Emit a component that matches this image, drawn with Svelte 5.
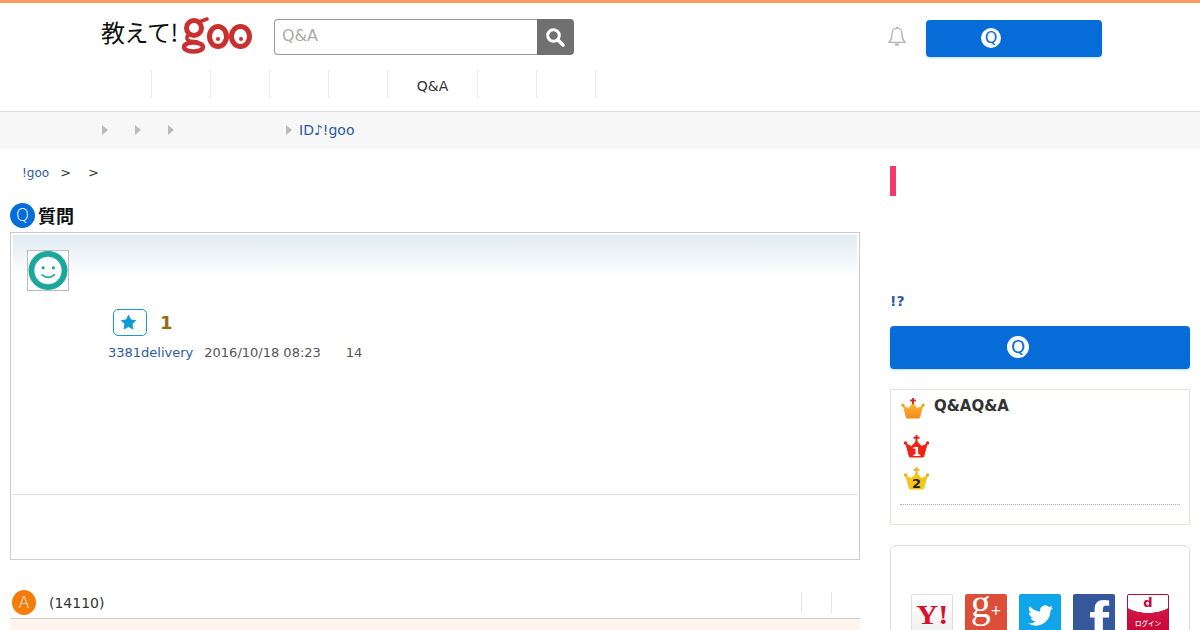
<script>
  const navBefore = [0, 1, 2, 3, 4];
  const navAfter = [0, 1];
  const crumbs = [27, 27, 112];
  const social = ['yahoo', 'gplus', 'twitter', 'facebook', 'docomo'];
  const crown = 'M6.500 23L3 10l5.500 2.500L13.500 7l5 5.500L24 10l-3.500 13z';
</script>

<div class="page">
  <header class="site-head">
    <div class="top">
      <a class="logo" href="#top">
        <span class="logo-ja">教えて!</span>
        <svg class="goo" viewBox="0 0 72 38" width="72" height="38" aria-label="goo">
          <g fill="none" stroke="#c8312f">
            <ellipse cx="13" cy="12" rx="7.500" ry="7.500" stroke-width="5" />
            <ellipse cx="12.500" cy="31" rx="9.500" ry="4.500" stroke-width="4.500" />
            <path d="M8 18c-3 3-3 6 1 7l8 1" stroke-width="3.500" />
            <path d="M18 6l8-3" stroke-width="3.500" stroke-linecap="round" />
            <ellipse cx="37" cy="20.500" rx="8.500" ry="10" stroke-width="5" />
            <ellipse cx="59.500" cy="20.500" rx="9" ry="10" stroke-width="5" />
          </g>
          <circle cx="37" cy="23" r="2" fill="#c8312f" />
          <circle cx="60" cy="23" r="2" fill="#c8312f" />
        </svg>
      </a>
      <form class="search" onsubmit={(e) => e.preventDefault()}>
        <input type="text" placeholder="Q&A" />
        <button type="submit" aria-label="search">
          <svg viewBox="0 0 20 20" width="20" height="20">
            <circle cx="8.500" cy="8.500" r="5.800" fill="none" stroke="#fff" stroke-width="3" />
            <path d="M13 13l5 5" stroke="#fff" stroke-width="3.400" stroke-linecap="round" />
          </svg>
        </button>
      </form>
      <div class="spacer"></div>
      <svg class="bell" viewBox="0 0 20 22" width="20" height="22">
        <path d="M10 2.200c-3.400 0-5 2.700-5 6 0 3.700-.9 5.800-3 8.200h16c-2.100-2.400-3-4.500-3-8.200 0-3.300-1.600-6-5-6z" fill="none" stroke="#b4b4b4" stroke-width="1.300" />
        <path d="M7.500 17.500c.4 1.500 1.300 2.300 2.500 2.300s2.100-.8 2.500-2.300z" fill="#b4b4b4" />
        <circle cx="10" cy="1.800" r="1.100" fill="#b4b4b4" />
      </svg>
      <a class="ask ask-top" href="#top"><span class="q-badge">Q</span></a>
    </div>
    <nav class="nav">
      {#each navBefore as n (n)}
        <span class="nav-item"></span>
      {/each}
      <span class="nav-item wide">Q&A</span>
      {#each navAfter as n (n)}
        <span class="nav-item"></span>
      {/each}
    </nav>
  </header>

  <div class="notice">
    {#each crumbs as w, i (i)}
      <span class="tri" style="margin-right: {w}px"></span>
    {/each}
    <span class="tri"></span>
    <a href="#top" class="notice-link">ID♪!goo</a>
  </div>

  <div class="columns">
    <main class="left">
      <div class="path">
        <a href="#top">!goo</a><span>&gt;</span><span>&gt;</span>
      </div>

      <h2 class="q-head"><span class="round blue">Q</span><span class="q-label">質問</span></h2>
      <section class="card">
        <div class="glow">
          <div class="avatar">
            <svg viewBox="0 0 40 40" width="40" height="39">
              <circle cx="20" cy="20" r="17" fill="#fff" stroke="#1ba79b" stroke-width="6" />
              <circle cx="15" cy="17.300" r="1.600" fill="#1ba79b" />
              <circle cx="25.500" cy="17.300" r="1.600" fill="#1ba79b" />
              <path d="M14 24.500c3.500 3.300 9 3.300 12.500 0" fill="none" stroke="#1ba79b" stroke-width="1.800" stroke-linecap="round" />
            </svg>
          </div>
        </div>
        <div class="fav">
          <span class="star-btn">
            <svg viewBox="0 0 20 20" width="17" height="17">
              <path d="M10 1.500l2.600 5.400 5.900.8-4.300 4.100 1.100 5.900-5.300-2.900-5.300 2.900 1.100-5.900-4.300-4.100 5.900-.8z" fill="#0f9bd7" stroke="#0f9bd7" stroke-linejoin="round" />
            </svg>
          </span>
          <b>1</b>
        </div>
        <div class="meta">
          <a href="#top">3381delivery</a>
          <span>2016/10/18 08:23</span>
          <span class="views">14</span>
        </div>
        <div class="rule"></div>
      </section>

      <div class="a-head">
        <span class="round orange">A</span>
        <span class="count">(14110)</span>
        <span class="tabs"><i></i><i></i></span>
      </div>
      <div class="a-body"></div>
    </main>

    <aside class="right">
      <div class="pink"></div>
      <a class="hint" href="#top">!?</a>
      <a class="ask ask-side" href="#top"><span class="q-badge big">Q</span></a>

      <section class="rank">
        <div class="rank-title">
          <svg viewBox="0 0 27 24" width="26" height="22">
            <defs>
              <linearGradient id="crownO" x1="0" y1="0" x2="0" y2="1">
                <stop offset="0" stop-color="#f7b731" />
                <stop offset="1" stop-color="#f58a1f" />
              </linearGradient>
            </defs>
            <path d={crown} fill="url(#crownO)" stroke="url(#crownO)" stroke-linejoin="round" />
            <circle cx="2.500" cy="9" r="1.800" fill="#e8a92b" />
            <circle cx="24.500" cy="9" r="1.800" fill="#e8a92b" />
            <path d="M13.500 1v7M10.500 3.800h6" stroke="#d8212a" stroke-width="2" />
          </svg>
          <h3>Q&AQ&A</h3>
        </div>
        <ul>
          <li>
            <svg viewBox="0 0 27 24" width="27" height="24">
              <path d={crown} fill="#ee2412" stroke="#ee2412" stroke-linejoin="round" />
              <circle cx="2.500" cy="9" r="1.800" fill="#d92a1c" />
              <circle cx="24.500" cy="9" r="1.800" fill="#d92a1c" />
              <path d="M13.500 1v7M10.500 3.800h6" stroke="#d92a1c" stroke-width="2" />
              <text x="13.500" y="22" class="rank-no light">1</text>
            </svg>
          </li>
          <li>
            <svg viewBox="0 0 27 24" width="27" height="24">
              <path d={crown} fill="#f5c518" stroke="#f5c518" stroke-linejoin="round" />
              <circle cx="2.500" cy="9" r="1.800" fill="#e6b422" />
              <circle cx="24.500" cy="9" r="1.800" fill="#e6b422" />
              <path d="M13.500 1v7M10.500 3.800h6" stroke="#e6b422" stroke-width="2" />
              <text x="13.500" y="22" class="rank-no">2</text>
            </svg>
          </li>
        </ul>
        <div class="dots"></div>
      </section>

      <section class="login">
        {#each social as s (s)}
          <a class="sns {s}" href="#top" aria-label={s}>
            {#if s === 'yahoo'}
              <span class="y">Y!</span>
            {:else if s === 'gplus'}
              <span>g<small>+</small></span>
            {:else if s === 'twitter'}
              <svg viewBox="0 0 24 24" width="25" height="25">
                <path fill="#fff" d="M23.953 4.570a10 10 0 01-2.825.775 4.958 4.958 0 002.163-2.723c-.951.555-2.005.959-3.127 1.184a4.920 4.920 0 00-8.384 4.482C7.690 8.095 4.067 6.130 1.640 3.162a4.822 4.822 0 00-.666 2.475c0 1.710.870 3.213 2.188 4.096a4.904 4.904 0 01-2.228-.616v.060a4.923 4.923 0 003.946 4.827 4.996 4.996 0 01-2.212.085 4.936 4.936 0 004.604 3.417 9.867 9.867 0 01-6.102 2.105c-.390 0-.779-.023-1.170-.067a13.995 13.995 0 007.557 2.209c9.053 0 13.998-7.496 13.998-13.985 0-.210 0-.420-.015-.630A9.935 9.935 0 0024 4.590z" />
              </svg>
            {:else if s === 'facebook'}
              <span>f</span>
            {:else}
              <span class="d">d</span>
              <span class="dlogin">ログイン</span>
            {/if}
          </a>
        {/each}
      </section>
    </aside>
  </div>
</div>

<style>
  :global(body) {
    background: #fff;
    color: #333;
    font-family: "DejaVu Sans", "Noto Sans CJK JP", sans-serif;
    overflow: hidden;
  }
  a {
    text-decoration: none;
    color: #2e5a9e;
  }
  h2, h3, ul {
    margin: 0;
    padding: 0;
  }
  .page {
    height: 630px;
    overflow: hidden;
  }

  /* header */
  .site-head {
    border-top: 3px solid #f79e5c;
    border-bottom: 1px solid #ddd;
    height: 108px;
  }
  .top {
    display: flex;
    align-items: flex-start;
    box-sizing: border-box;
    padding: 13px 98px 0 101px;
    height: 54px;
  }
  .logo {
    display: flex;
    align-items: flex-start;
    width: 173px;
    flex: none;
  }
  .logo-ja {
    font: 400 24px/32px "Noto Sans CJK JP", sans-serif;
    color: #111;
    letter-spacing: -.4px;
    width: 80px;
    flex: none;
  }
  .goo {
    flex: none;
    display: block;
  }
  .search {
    display: flex;
    width: 300px;
    height: 36px;
    margin-top: 3px;
    flex: none;
  }
  .search input {
    flex: 1;
    min-width: 0;
    border: 1px solid #999;
    border-right: 0;
    border-radius: 4px 0 0 4px;
    padding: 0 7px 4px;
    font: 16px "DejaVu Sans", sans-serif;
    outline: none;
  }
  .search input::placeholder {
    color: #aaa;
  }
  .search button {
    width: 37px;
    border: 0;
    padding: 0;
    background: #707070;
    border-radius: 0 4px 4px 0;
    display: flex;
    align-items: center;
    justify-content: center;
  }
  .search button svg {
    margin-right: 2px;
  }
  .spacer {
    flex: 1;
  }
  .bell {
    margin: 10px 19px 0 0;
  }
  .ask {
    display: flex;
    align-items: center;
    justify-content: center;
    background: #056cd8;
    border-radius: 4px;
    box-shadow: 0 1px 2px rgba(5, 108, 216, .25);
  }
  .ask-top {
    width: 176px;
    height: 37px;
    margin-top: 4px;
  }
  .ask-top .q-badge {
    margin-right: 46px;
  }
  .q-badge {
    width: 20px;
    height: 20px;
    margin-bottom: 2px;
    border-radius: 50%;
    background: #fff;
    color: #056cd8;
    font: 16px/20px "DejaVu Sans", sans-serif;
    text-align: center;
  }
  .q-badge.big {
    width: 22px;
    height: 22px;
    font-size: 18px;
    line-height: 22px;
    margin-left: -44px;
  }
  .nav {
    display: flex;
    padding: 13px 0 0 93px;
    height: 28px;
  }
  .nav-item {
    width: 58px;
    height: 28px;
    border-right: 1px solid #e8e8e8;
    font-size: 14px;
    line-height: 32px;
    text-align: center;
    color: #333;
  }
  .nav-item.wide {
    width: 89px;
  }
  .notice {
    box-sizing: border-box;
    height: 37px;
    background: #f7f7f7;
    display: flex;
    align-items: center;
    padding: 0 0 2px 102px;
  }
  .tri {
    width: 0;
    height: 0;
    border: 5px solid transparent;
    border-left: 6px solid #bbb;
    border-right: 0;
  }
  .notice-link {
    font-size: 14px;
    margin-left: 7px;
  }

  /* columns */
  .columns {
    display: flex;
    padding: 0 10px;
    gap: 30px;
  }
  .left {
    width: 850px;
    flex: none;
  }
  .right {
    width: 300px;
    flex: none;
  }
  .path {
    display: flex;
    align-items: center;
    height: 17px;
    margin-top: 15px;
    padding-left: 12px;
    font-size: 12px;
    color: #333;
  }
  .path span {
    font-size: 13px;
    margin-left: 11px;
  }
  .path span + span {
    margin-left: 17px;
  }
  .q-head {
    display: flex;
    align-items: center;
    gap: 3px;
    margin-top: 22px;
    height: 25px;
    font: 700 18px "Noto Sans CJK JP", sans-serif;
    color: #111;
  }
  .q-label {
    margin-bottom: 2px;
  }
  .round {
    width: 25px;
    height: 25px;
    border-radius: 50%;
    color: #fff;
    font: 300 17px/25px "DejaVu Sans", sans-serif;
    text-align: center;
    flex: none;
  }
  .blue {
    background: #056cd8;
  }
  .orange {
    background: #f57c0a;
    font-size: 16px;
    width: 24px;
    height: 25px;
  }
  .card {
    margin-top: 4px;
    box-sizing: border-box;
    height: 328px;
    border: 1px solid #ccc;
    padding: 2px;
  }
  .glow {
    box-sizing: border-box;
    height: 64px;
    padding: 15px 0 0 14px;
    background: linear-gradient(#dfebf2, #fff 42px);
  }
  .avatar {
    width: 40px;
    height: 39px;
    border: 1px solid #bbb;
    background: #fff;
  }
  .avatar svg {
    display: block;
  }
  .fav {
    display: flex;
    align-items: center;
    margin: 10px 0 0 100px;
    height: 27px;
    gap: 13px;
  }
  .fav b {
    font-size: 18px;
    color: #9a6a12;
  }
  .star-btn {
    width: 32px;
    height: 25px;
    border: 1px solid #1d9bc7;
    border-radius: 5px;
    display: flex;
    align-items: center;
    justify-content: center;
  }
  .star-btn svg {
    margin-right: 4px;
  }
  .meta {
    display: flex;
    margin: 9px 0 0 95px;
    font-size: 13px;
    line-height: 16px;
    color: #555;
  }
  .meta span {
    margin-left: 11px;
  }
  .meta .views {
    margin-left: 25px;
  }
  .rule {
    height: 1px;
    background: #ddd;
    margin-top: 133px;
  }
  .a-head {
    display: flex;
    align-items: center;
    margin-top: 30px;
    height: 25px;
    padding-left: 2px;
    font-size: 14px;
  }
  .count {
    margin-left: 13px;
  }
  .tabs {
    margin-left: auto;
    display: flex;
  }
  .tabs i {
    width: 29px;
    height: 21px;
    border-left: 1px solid #e5e5e5;
  }
  .tabs i:last-child {
    width: 28px;
  }
  .a-body {
    margin-top: 3px;
    height: 40px;
    border-top: 1px solid #ccc;
    background: #fff5ee;
  }

  /* side */
  .pink {
    width: 6px;
    height: 30px;
    margin-top: 17px;
    background: #f23b6c;
  }
  .hint {
    display: block;
    margin-top: 97px;
    font-size: 14px;
    font-weight: 700;
    line-height: 16px;
  }
  .ask-side {
    height: 43px;
    margin-top: 17px;
  }
  .rank {
    margin-top: 20px;
    height: 136px;
    box-sizing: border-box;
    border: 1px solid #e8e3d8;
    padding: 7px 9px 0;
  }
  .rank-title {
    display: flex;
    align-items: flex-start;
    gap: 8px;
    height: 22px;
  }
  .rank-title h3 {
    font-size: 15px;
    line-height: 17px;
    margin-top: 1px;
    color: #333;
  }
  .rank ul {
    list-style: none;
    padding-left: 3px;
    margin-top: 15px;
  }
  .rank li {
    height: 32px;
  }
  .rank-no {
    font: 700 13px "DejaVu Sans", sans-serif;
    text-anchor: middle;
    fill: #222;
  }
  .rank-no.light {
    fill: #fff;
  }
  .dots {
    margin-top: 6px;
    border-top: 1px dotted #aaa;
  }
  .login {
    margin-top: 20px;
    height: 120px;
    box-sizing: border-box;
    border: 1px solid #ddd;
    border-radius: 6px;
    padding: 48px 20px 0;
    display: flex;
    gap: 12px;
  }
  .sns {
    width: 42px;
    height: 42px;
    flex: none;
    border-radius: 2px;
    display: flex;
    flex-direction: column;
    align-items: center;
    justify-content: center;
    color: #fff;
    box-sizing: border-box;
    overflow: hidden;
  }
  .yahoo {
    background: linear-gradient(#fff, #eee);
    border: 1px solid #ddd;
    color: #d5122e;
    font: 700 27px "Liberation Serif", serif;
  }
  .y {
    display: inline-block;
    transform: scaleX(1.12);
  }
  .gplus {
    background: #dc4e38;
    font: 400 40px/42px "Liberation Serif", serif;
    padding-bottom: 16px;
  }
  .gplus small {
    font-size: 18px;
    font-weight: 700;
  }
  .twitter {
    background: #10a4ea;
  }
  .facebook {
    background: #35589c;
    font: 700 60px/60px "Liberation Sans", sans-serif;
    align-items: flex-end;
    padding: 16px 6px 0 0;
  }
  .docomo {
    background:
      radial-gradient(ellipse 30px 18px at 50% 0, #fff 98%, transparent 100%),
      linear-gradient(#d8264f, #c80035);
    border: 1px solid #b5103c;
    justify-content: flex-start;
  }
  .d {
    color: #cc0033;
    font: 700 13px/16px "DejaVu Sans", sans-serif;
  }
  .dlogin {
    font: 500 6.500px/10px "Noto Sans CJK JP", sans-serif;
    margin-top: 7px;
    white-space: nowrap;
  }
</style>
